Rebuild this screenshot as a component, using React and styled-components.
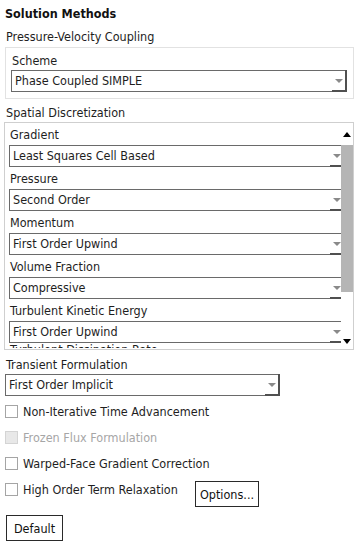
import React from "react";
import styled, { createGlobalStyle } from "styled-components";

const GlobalStyle = createGlobalStyle`
  html, body {
    margin: 0;
    padding: 0;
    background: #ffffff;
  }
  body {
    font-family: "DejaVu Sans Condensed", "DejaVu Sans", sans-serif;
    font-size: 12.5px;
    color: #1e1e1e;
  }
`;

const spatial = [
  { label: "Gradient", value: "Least Squares Cell Based" },
  { label: "Pressure", value: "Second Order" },
  { label: "Momentum", value: "First Order Upwind" },
  { label: "Volume Fraction", value: "Compressive" },
  { label: "Turbulent Kinetic Energy", value: "First Order Upwind" },
];

const checks = [
  { label: "Non-Iterative Time Advancement" },
  { label: "Frozen Flux Formulation", disabled: true },
  { label: "Warped-Face Gradient Correction" },
];

const App = () => {
  return (
    <>
      <GlobalStyle />
      <Page>
        <Title>Solution Methods</Title>
        <Label>Pressure-Velocity Coupling</Label>
        <GroupBox>
          <Label>Scheme</Label>
          <Dropdown value="Phase Coupled SIMPLE" />
        </GroupBox>

        <Label>Spatial Discretization</Label>
        <ScrollPanel>
          <ScrollContent>
            {spatial.map((item) => (
              <Item key={item.label}>
                <ItemLabel>{item.label}</ItemLabel>
                <Dropdown value={item.value} />
              </Item>
            ))}
            <CutLabel>Turbulent Dissipation Rate</CutLabel>
          </ScrollContent>
          <ScrollBar>
            <ArrowZone>
              <Tri up />
            </ArrowZone>
            <Thumb />
            <Track />
            <ArrowZone bottom>
              <Tri />
            </ArrowZone>
          </ScrollBar>
        </ScrollPanel>

        <Label top={6}>Transient Formulation</Label>
        <Dropdown value="First Order Implicit" width={275} />

        <Checks>
          {checks.map((c) => (
            <CheckRow key={c.label}>
              <Box disabled={c.disabled} />
              <CheckText disabled={c.disabled}>{c.label}</CheckText>
            </CheckRow>
          ))}
          <LastRow>
            <CheckRow fixed>
              <Box />
              <CheckText>High Order Term Relaxation</CheckText>
            </CheckRow>
            <Button w={64} top={5}>Options...</Button>
          </LastRow>
        </Checks>

        <Button w={57} left={1} top={8}>Default</Button>
      </Page>
    </>
  );
};
export default App;

const Dropdown = ({ value, width }) => (
  <SelectBox width={width}>
    <SelectText>{value}</SelectText>
    <SelectButton>
      <SmallTri />
    </SelectButton>
  </SelectBox>
);

// css
const Page = styled.div`
  width: 361px;
  height: 547px;
  box-sizing: border-box;
  padding: 5px 0 0 5px;
  overflow: hidden;
`;

const Title = styled.div`
  font-weight: bold;
  font-size: 12.5px;
  line-height: 18px;
  color: #111;
`;

const Label = styled.div`
  line-height: 18px;
  margin-top: ${({ top }) => top || 5}px;
  padding-left: 1px;
`;

const GroupBox = styled.div`
  width: 349px;
  box-sizing: border-box;
  border: 1px solid #e2e2e2;
  padding: 4px 6px 6px 5px;
  margin-top: 1px;

  ${Label} {
    margin-top: 0;
  }
`;

const SelectBox = styled.div`
  width: ${({ width }) => width || 336}px;
  height: 22px;
  box-sizing: border-box;
  border: 1px solid #6a6a6a;
  background: #fff;
  display: flex;
  align-items: stretch;
`;

const SelectText = styled.div`
  flex: 1;
  padding-left: 3px;
  line-height: 20px;
  white-space: nowrap;
  overflow: hidden;
`;

const SelectButton = styled.div`
  width: 15px;
  display: flex;
  align-items: center;
  justify-content: center;
  border-right: 2px solid #505050;
  border-bottom: 2px solid #505050;
  margin: -1px -1px -1px 0;
  padding-top: 1px;
  box-sizing: border-box;
`;

const SmallTri = styled.div`
  width: 0;
  height: 0;
  border-left: 4px solid transparent;
  border-right: 4px solid transparent;
  border-top: 4px solid #8a8a8a;
`;

const ScrollPanel = styled.div`
  width: 350px;
  height: 228px;
  box-sizing: border-box;
  border: 1px solid #cfcfcf;
  margin-left: -1px;
  display: flex;
`;

const ScrollContent = styled.div`
  flex: 1;
  overflow: hidden;
  padding-left: 4px;
`;

const Item = styled.div`
  display: flex;
  flex-direction: column;
`;

const ItemLabel = styled.div`
  line-height: 18px;
  padding: 3px 0 1px 1px;
  white-space: nowrap;
`;

const CutLabel = styled.div`
  height: 5px;
  overflow: hidden;
  line-height: 14px;
  padding-left: 1px;
  white-space: nowrap;
`;

const ScrollBar = styled.div`
  width: 12px;
  display: flex;
  flex-direction: column;
`;

const ArrowZone = styled.div`
  height: ${({ bottom }) => (bottom ? 18 : 22)}px;
  display: flex;
  justify-content: center;
  align-items: ${({ bottom }) => (bottom ? "flex-start" : "center")};
  padding-top: ${({ bottom }) => (bottom ? 8 : 0)}px;
  box-sizing: border-box;
`;

const Tri = styled.div`
  width: 0;
  height: 0;
  border-left: 4px solid transparent;
  border-right: 4px solid transparent;
  ${({ up }) =>
    up ? "border-bottom: 5px solid #000;" : "border-top: 5px solid #000;"}
`;

const Thumb = styled.div`
  height: 147px;
  background: #b5b5b5;
`;

const Track = styled.div`
  flex: 1;
`;

const Checks = styled.div`
  display: flex;
  flex-direction: column;
  margin-top: 2px;
`;

const CheckRow = styled.div`
  height: 26px;
  display: flex;
  align-items: center;
  gap: 5px;
  ${({ fixed }) => fixed && "width: 190px;"}
`;

const Box = styled.div`
  width: 13px;
  height: 13px;
  box-sizing: border-box;
  border: 1px solid ${({ disabled }) => (disabled ? "#d4d4d4" : "#a5a5a5")};
  background: ${({ disabled }) => (disabled ? "#e8e8e8" : "#fff")};
`;

const CheckText = styled.span`
  color: ${({ disabled }) => (disabled ? "#a6a6a6" : "#1e1e1e")};
  white-space: nowrap;
`;

const LastRow = styled.div`
  display: flex;
  align-items: flex-start;
`;

const Button = styled.div`
  width: ${({ w }) => w}px;
  height: 26px;
  box-sizing: border-box;
  border: 1px solid #2a2a2a;
  background: #fff;
  display: flex;
  align-items: center;
  justify-content: center;
  margin-top: ${({ top }) => top || 4}px;
  margin-left: ${({ left }) => left || 0}px;
  color: #111;
`;
